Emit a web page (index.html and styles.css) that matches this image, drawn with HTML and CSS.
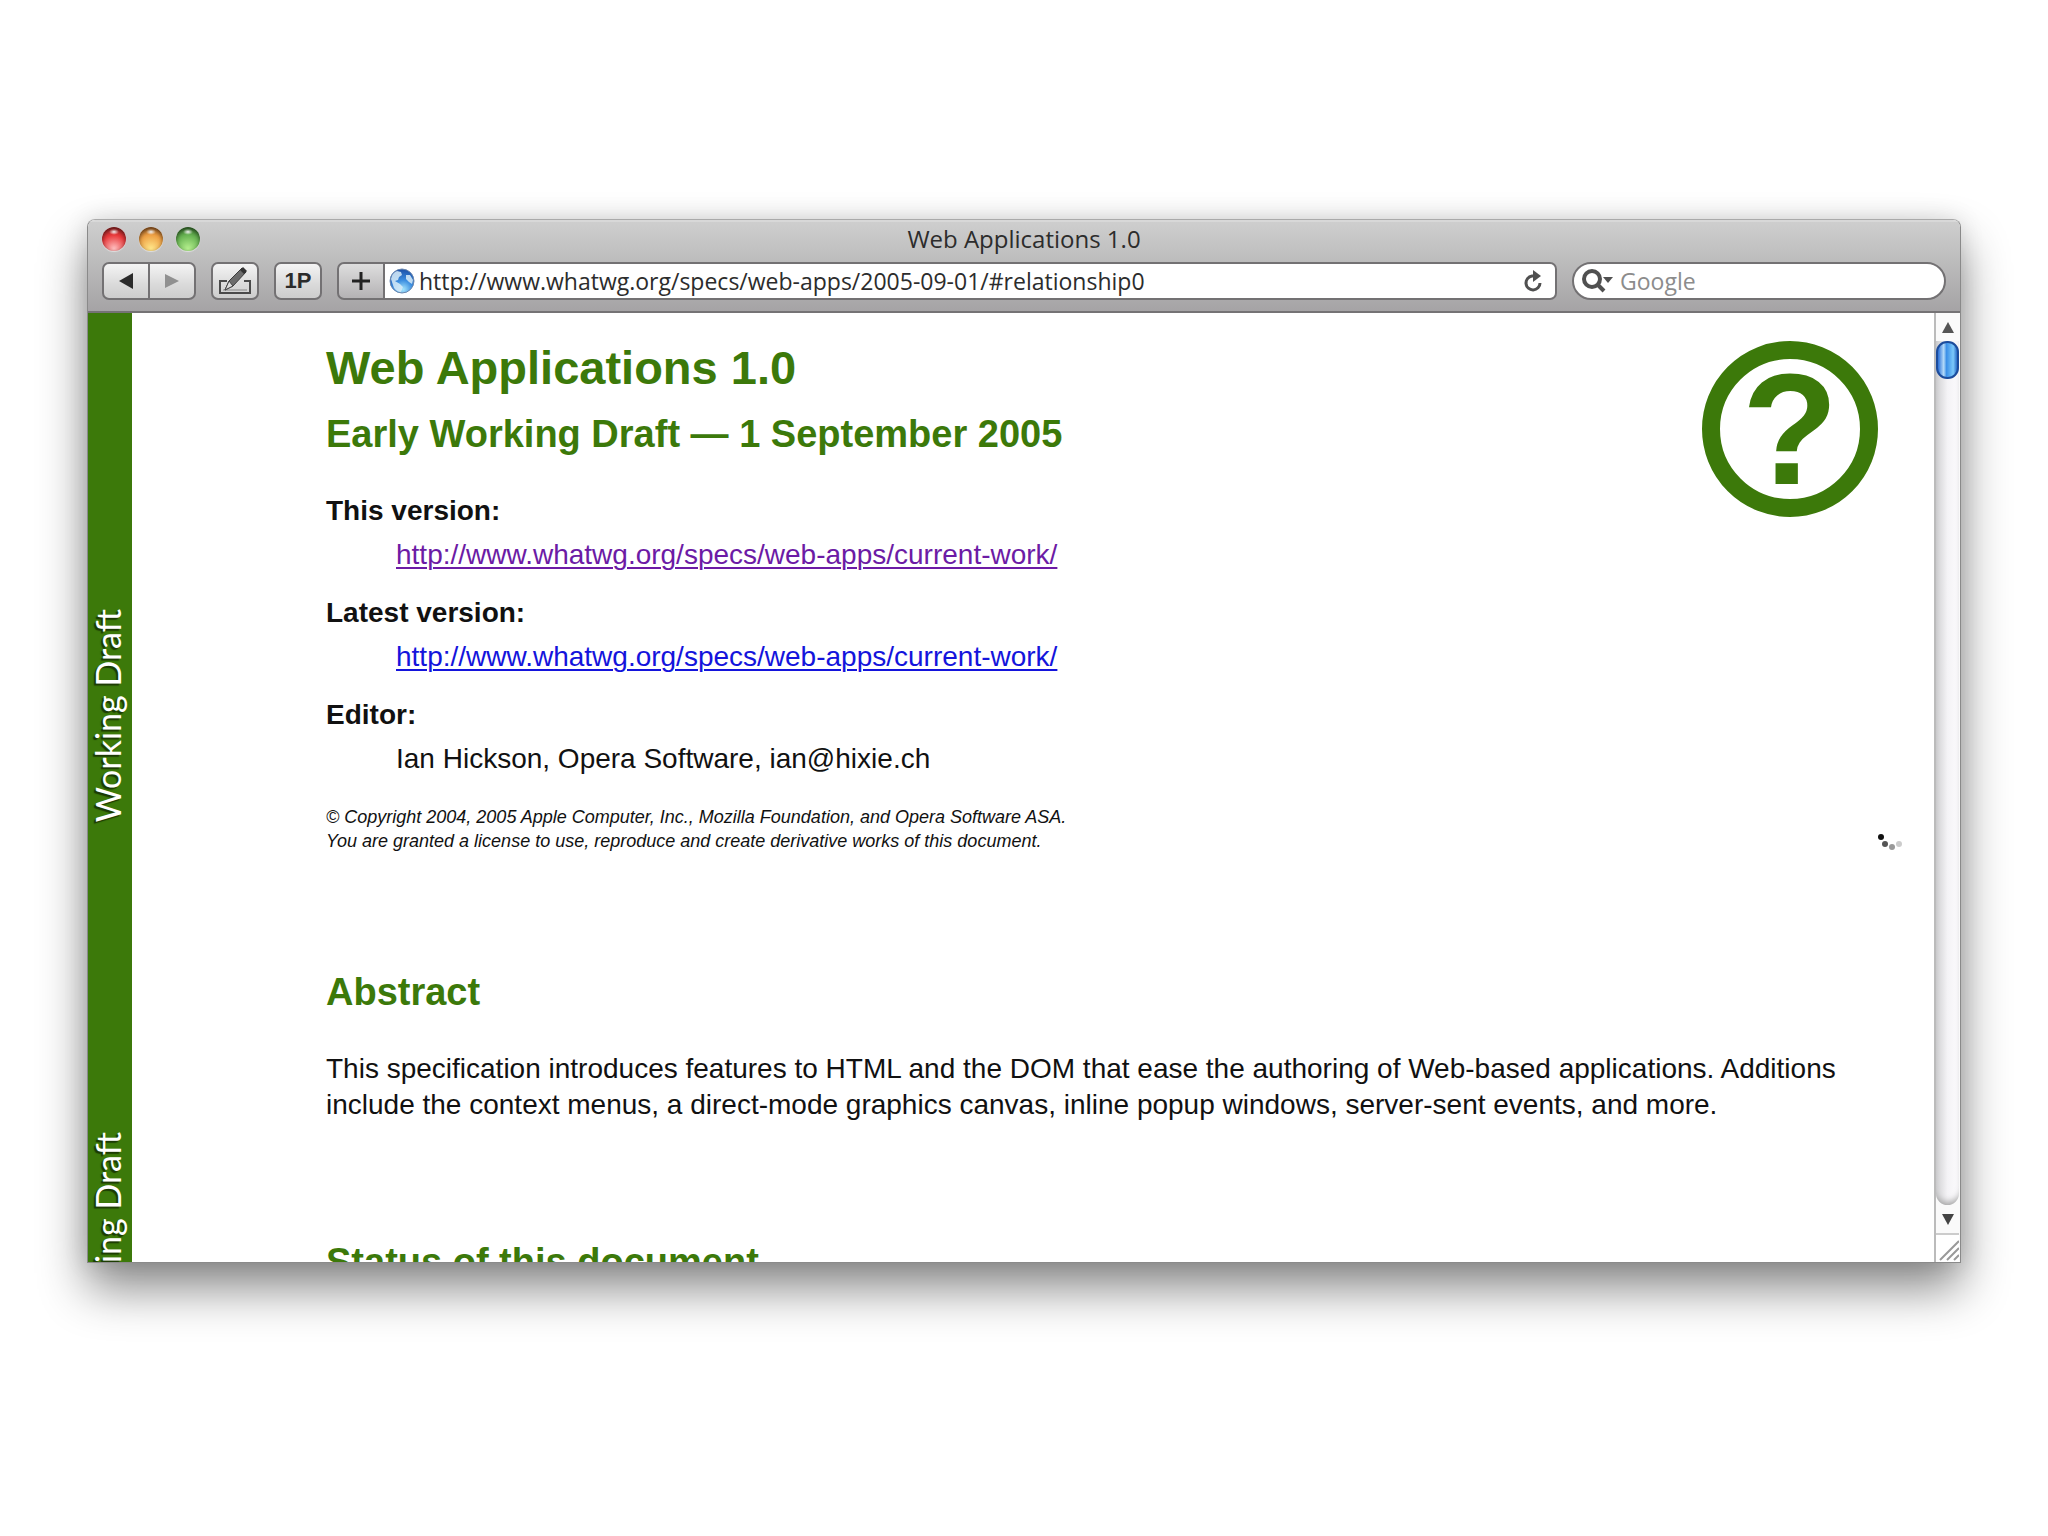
FILE: index.html
```html
<!DOCTYPE html>
<html lang="en">
<head>
<meta charset="utf-8">
<title>Web Applications 1.0</title>
<link rel="stylesheet" href="styles.css">
</head>
<body>
<div class="window">
  <header class="chrome">
    <div class="titlebar">
      <div class="lights">
        <button class="light red" aria-label="Close"></button>
        <button class="light amber" aria-label="Minimise"></button>
        <button class="light green" aria-label="Zoom"></button>
      </div>
      <div class="title">Web Applications 1.0</div>
    </div>
    <div class="toolbar">
      <div class="pair">
        <button class="tool back" aria-label="Back"><svg width="14" height="16" viewBox="0 0 14 16"><path d="M14 0v16L0 8z" fill="#2b2b2b"/></svg></button>
        <button class="tool forward" aria-label="Forward"><svg width="14" height="14" viewBox="0 0 14 14"><path d="M0 0v14L14 7z" fill="#909090"/></svg></button>
      </div>
      <button class="tool" aria-label="Edit"><svg width="34" height="30" viewBox="0 0 34 30"><path d="M9 15H2v12h30V15h-6" fill="none" stroke="#4a4a4a" stroke-width="2"/><path d="M5 24h24" stroke="#888" stroke-width="1"/><path d="M7 24l4-9L24 2l4 4L15 20z" fill="#6c6c6c" stroke="#3c3c3c" stroke-width="1"/><path d="M22 4l3-3 4 4-3 3z" fill="#333"/><path d="M7 24l4-9 4 5z" fill="#ddd" stroke="#444"/></svg></button>
      <button class="tool onep">1P</button>
      <div class="address">
        <button class="tool add" aria-label="Add bookmark"><svg width="18" height="18" viewBox="0 0 18 18"><path d="M9 0v18M0 9h18" stroke="#222" stroke-width="3"/></svg></button>
        <div class="field">
          <svg class="globe" width="26" height="26" viewBox="0 0 26 26"><defs><radialGradient id="g" cx=".55" cy=".85" r=".85"><stop offset="0" stop-color="#a4e4fc"/><stop offset=".45" stop-color="#3c8ee0"/><stop offset="1" stop-color="#1a4ea6"/></radialGradient></defs><circle cx="13" cy="13" r="12" fill="url(#g)" stroke="#6c87ad"/><path d="M2 11q1-6 6-8l4 1 1 3-3 2-1 3-3 1 5 3 3 3-2 5q-4 0-7-4zM17 7l4 0 3 5-1 4-3-2-3-3z" fill="#d8ecf8" opacity=".85"/></svg>
          <input class="url" type="text" aria-label="Address" value="http://www.whatwg.org/specs/web-apps/2005-09-01/#relationship0">
          <button class="reload" aria-label="Reload"><svg width="20" height="22" viewBox="0 0 20 22"><path d="M13 6H9a7 7 0 1 0 8 7" fill="none" stroke="#505050" stroke-width="3"/><path d="M10 0l8 6-8 6z" fill="#505050"/></svg></button>
        </div>
      </div>
      <div class="search">
        <svg width="32" height="24" viewBox="0 0 32 24"><circle cx="10" cy="10" r="8" fill="none" stroke="#505050" stroke-width="4"/><path d="M15 15l7 7" stroke="#505050" stroke-width="4"/><path d="M21 8h10l-5 6z" fill="#505050"/></svg>
        <input class="query" type="text" aria-label="Search" placeholder="Google">
      </div>
    </div>
  </header>
  <div class="view">
    <aside class="strip"><span>Working Draft</span><span>Working Draft</span></aside>
    <main class="page">
      <svg class="logo" width="176" height="176" viewBox="0 0 176 176"><circle cx="88" cy="88" r="79" fill="none" stroke="#3c790a" stroke-width="18"/><text x="88" y="143" text-anchor="middle" class="mark">?</text></svg>
      <h1>Web Applications 1.0</h1>
      <h2 class="sub">Early Working Draft — 1 September 2005</h2>
      <dl>
        <dt>This version:</dt>
        <dd><a class="visited" href="#current">http://www.whatwg.org/specs/web-apps/current-work/</a></dd>
        <dt>Latest version:</dt>
        <dd><a href="#latest">http://www.whatwg.org/specs/web-apps/current-work/</a></dd>
        <dt>Editor:</dt>
        <dd>Ian Hickson, Opera Software, ian@hixie.ch</dd>
      </dl>
      <p class="copyright">© Copyright 2004, 2005 Apple Computer, Inc., Mozilla Foundation, and Opera Software ASA.<br>You are granted a license to use, reproduce and create derivative works of this document.</p>
      <h2>Abstract</h2>
      <p>This specification introduces features to HTML and the DOM that ease the authoring of Web-based applications. Additions include the context menus, a direct-mode graphics canvas, inline popup windows, server-sent events, and more.</p>
      <h2>Status of this document</h2>
    </main>
    <div class="scroll">
      <button class="arrow up" aria-label="Scroll up"><svg width="12" height="11" viewBox="0 0 12 11"><path d="M0 11h12L6 0z" fill="#555"/></svg></button>
      <div class="track"><div class="thumb"></div></div>
      <button class="arrow" aria-label="Scroll down"><svg width="12" height="11" viewBox="0 0 12 11"><path d="M0 0h12L6 11z" fill="#444"/></svg></button>
      <svg class="grip" width="23" height="27" viewBox="0 0 23 27"><path d="M4 25L23 6M11 25l12-12M18 25l5-5" stroke="#999" stroke-width="2"/></svg>
    </div>
    <svg class="spinner" width="26" height="20" viewBox="0 0 26 20"><circle cx="4" cy="4" r="3" fill="#111"/><circle cx="8" cy="11" r="3" fill="#555"/><circle cx="15" cy="14" r="3" fill="#999"/><circle cx="22" cy="11" r="3" fill="#ccc"/></svg>
  </div>
</div>
</body>
</html>
```
FILE: styles.css
```css
* { box-sizing: border-box; }

body {
  margin: 0;
  height: 100vh;
  padding: 219px 87px 273px;
  display: flex;
  background: #fff;
  font-family: "Liberation Sans", Arial, sans-serif;
  font-size: 28px;
  line-height: 36px;
  color: #111;
  overflow: hidden;
}

button { margin: 0; padding: 0; border: 0; background: none; font: inherit; }
svg { display: block; flex: none; }

.window {
  flex: 1;
  min-width: 0;
  display: flex;
  flex-direction: column;
  border: 1px solid #8a8a8a;
  border-top-color: #aaa;
  border-radius: 8px 8px 0 0;
  box-shadow: 0 26px 48px rgba(0, 0, 0, .46), 0 0 24px rgba(0, 0, 0, .12);
  overflow: hidden;
}

.chrome {
  height: 93px;
  flex: none;
  border-top: 2px solid #d8d8d8;
  border-bottom: 2px solid #757375;
  background: linear-gradient(#cecece, #bcbcbc 45%, #a5a3a5);
  font-family: "Open Sans", "Noto Sans", sans-serif;
  font-size: 23px;
  color: #2c2c2c;
}

.titlebar {
  height: 40px;
  padding: 0 14px 6px;
  display: grid;
  grid-template-columns: 1fr auto 1fr;
  align-items: center;
}
.title { font-size: 24px; line-height: 34px; }
.lights { display: flex; gap: 13px; }
.light {
  width: 24px;
  height: 24px;
  border-radius: 50%;
  box-shadow: inset 0 2px 4px rgba(0, 0, 0, .5), 0 1px 1px rgba(255, 255, 255, .5);
}
.red { background: radial-gradient(ellipse 5px 3px at 50% 20%, #fff, transparent), radial-gradient(circle at 50% 90%, #ffc0c0, #e8393b 55%, #8d2020); }
.amber { background: radial-gradient(ellipse 5px 3px at 50% 20%, #fff, transparent), radial-gradient(circle at 50% 90%, #ffe78a, #eea044 55%, #93501c); }
.green { background: radial-gradient(ellipse 5px 3px at 50% 20%, #fff, transparent), radial-gradient(circle at 50% 90%, #b6f08e, #67b352 55%, #2c6424); }

.toolbar { height: 38px; padding: 0 14px; display: flex; gap: 15px; }
.pair, .address { display: flex; }
.address { flex: 1; }
.tool {
  width: 48px;
  height: 38px;
  display: flex;
  align-items: center;
  justify-content: center;
  border: 2px solid #737173;
  border-radius: 7px;
  background: linear-gradient(#f4f4f4, #dadada 60%, #cdcdcd);
  color: #2b2b2b;
}
.back { border-radius: 7px 0 0 7px; }
.forward { margin-left: -2px; border-radius: 0 7px 7px 0; }
.onep { font-family: "Liberation Sans", Arial, sans-serif; font-weight: bold; font-size: 22px; }
.add { border-radius: 7px 0 0 7px; background: linear-gradient(#dedede, #b4b2b4); }
.field {
  flex: 1;
  display: flex;
  align-items: center;
  gap: 4px;
  padding: 0 12px 0 4px;
  border: 2px solid #737173;
  border-left: 0;
  border-radius: 0 7px 7px 0;
  background: #fff;
}
.url, .query {
  flex: 1;
  min-width: 0;
  padding: 0;
  border: 0;
  outline: 0;
  background: none;
  font: inherit;
  color: #2c2c2c;
}
.query::placeholder { color: #8c8c8c; opacity: 1; }
.search {
  width: 374px;
  display: flex;
  align-items: center;
  gap: 6px;
  padding: 0 20px 0 8px;
  border: 2px solid #737173;
  border-radius: 19px;
  background: #fff;
}

.view { position: relative; flex: 1; min-height: 0; display: flex; overflow: hidden; background: #fff; }

.strip {
  width: 44px;
  flex: none;
  padding: 296px 4px 0 0;
  display: flex;
  flex-direction: column;
  align-items: center;
  gap: 310px;
  background: #3c790a;
  color: #fff;
  font-family: Lato, "Open Sans", sans-serif;
  font-size: 34px;
  line-height: 40px;
  text-shadow: -2px -2px 1px #1c3a04;
}
.strip span { writing-mode: vertical-rl; transform: rotate(180deg); white-space: nowrap; }

.page { flex: 1; min-width: 0; padding: 28px 56px 0 194px; }
h1, h2 { margin: 0; color: #3c790a; }
h1 { font-size: 47px; line-height: 54px; }
h2 { margin: 116px 0 36px; font-size: 38px; line-height: 46px; }
h2.sub { margin: 16px 0 36px; }
dl { margin: 0 0 28px; }
dt { font-weight: bold; }
dd { margin: 8px 0 22px 70px; }
p { margin: 0; }
a { color: #1414dc; text-underline-offset: 3px; text-decoration-thickness: 2px; }
a.visited { color: #6c1ba5; }
.copyright { font-size: 18px; line-height: 24px; font-style: italic; }
.logo { float: right; }
.mark { font-size: 158px; font-weight: bold; fill: #3c790a; }

.scroll {
  width: 26px;
  flex: none;
  display: flex;
  flex-direction: column;
  padding-right: 1px;
  border-left: 2px solid #bbb;
  background: #fafafa;
}
.arrow { height: 30px; display: flex; align-items: center; justify-content: center; border-bottom: 2px solid #ccc; }
.arrow.up { height: 28px; border: 0; }
.track {
  flex: 1;
  border-radius: 0 0 12px 12px;
  background: linear-gradient(90deg, #d0d0d2, #f4f3f6 50%, #fcfbfd);
  box-shadow: inset 0 -6px 6px -3px #a8a8a8;
}
.thumb {
  height: 38px;
  border: 2px solid #1c4c9c;
  border-radius: 11px;
  background: linear-gradient(90deg, #2a70d8, #b4daf8 30%, #3b90e8 45%, #7cc8fa 80%, #2a6cc8);
}
.grip { background: #fff; }

.spinner { position: absolute; right: 57px; top: 520px; }
```
